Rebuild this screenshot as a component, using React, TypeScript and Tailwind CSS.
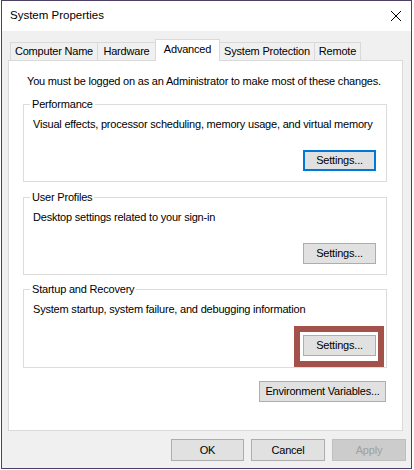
const tabs = [
  { label: "Computer Name", w: "w-[88px]" },
  { label: "Hardware", w: "w-[59px]" },
  { label: "Advanced", w: "w-[65px]", active: true },
  { label: "System Protection", w: "w-[96px]" },
  { label: "Remote", w: "w-[47px]" },
];

const btn =
  "h-[21px] border border-[#adadad] bg-[#e1e1e1] flex items-center justify-center leading-none";

function Group({
  title,
  text,
  focused,
  highlight,
  className = "",
}: {
  title: string;
  text: string;
  focused?: boolean;
  highlight?: boolean;
  className?: string;
}) {
  return (
    <fieldset className={`border border-[#dcdcdc] pl-[9px] pr-[10px] ${className}`}>
      <legend className="leading-[16px] px-[2px] -ml-[3px]">{title}</legend>
      <div className="mt-[4px] leading-[16px]">{text}</div>
      <div className="mt-[18px] flex justify-end">
        <div className="relative">
          <button
            className={`w-[73px] h-[21px] flex items-center justify-center bg-[#e1e1e1] ${
              focused ? "border-2 border-[#0078d7]" : "border border-[#adadad]"
            }`}
          >
            Settings...
          </button>
          {highlight && (
            <div className="pointer-events-none absolute -left-[9px] -right-[8px] -top-[9px] -bottom-[11px] border-[6px] border-[#a3524b]" />
          )}
        </div>
      </div>
    </fieldset>
  );
}

export default function App() {
  return (
    <div className="w-[414px] h-[470px] bg-white font-['Liberation_Sans',Arial,sans-serif] text-[11px] tracking-[-0.2px] text-black">
      <div className="ml-[1px] w-[411px] h-[469px] border border-[#4d3f66] bg-[#f0f0f0] flex flex-col">
        {/* Title bar */}
        <div className="h-[30px] bg-white flex items-center justify-between pl-[8px] pr-[6px]">
          <span className="text-[11.5px] tracking-normal">System Properties</span>
          <svg width="12" height="12" viewBox="0 0 12 12" className="mr-[3px]">
            <path d="M1 1 L11 11 M11 1 L1 11" stroke="#000" strokeWidth="1" fill="none" />
          </svg>
        </div>

        {/* Tabs */}
        <div className="pt-[8px] pl-[8px] flex items-end h-[29px]">
          {tabs.map((t, i) =>
            t.active ? (
              <div
                key={t.label}
                className={`${t.w} ${i ? "-ml-px" : ""} h-[22px] -mb-px relative z-10 bg-white border border-b-0 border-[#d9d9d9] flex items-center justify-center pb-[2px]`}
              >
                {t.label}
              </div>
            ) : (
              <div
                key={t.label}
                className={`${t.w} ${i ? "-ml-px" : ""} h-[18px] bg-[#f0f0f0] border border-b-0 border-[#d9d9d9] flex items-center justify-center`}
              >
                {t.label}
              </div>
            )
          )}
        </div>

        {/* Panel */}
        <div className="ml-[6px] w-[395px] h-[371px] border border-[#d9d9d9] bg-white pt-[12px] pl-[14px] pr-[15px] flex flex-col">
          <div className="pl-[4px] leading-[16px]">
            You must be logged on as an Administrator to make most of these changes.
          </div>
          <Group
            className="mt-[7px] pb-[10px]"
            title="Performance"
            text="Visual effects, processor scheduling, memory usage, and virtual memory"
            focused
          />
          <Group
            className="mt-[7px] pb-[10px]"
            title="User Profiles"
            text="Desktop settings related to your sign-in"
          />
          <Group
            className="mt-[6px] pb-[11px]"
            title="Startup and Recovery"
            text="System startup, system failure, and debugging information"
            highlight
          />
          <div className="mt-[13px] flex justify-end pr-[1px]">
            <button className={`${btn} w-[127px]`}>Environment Variables...</button>
          </div>
        </div>

        {/* Footer buttons */}
        <div className="mt-[8px] flex justify-end gap-[7px] pr-[5px]">
          <button className={`${btn} h-[22px] w-[73px]`}>OK</button>
          <button className={`${btn} h-[22px] w-[74px]`}>Cancel</button>
          <button className="h-[22px] w-[74px] border border-[#bfbfbf] bg-[#cccccc] text-[#a0a0a0] flex items-center justify-center leading-none">
            Apply
          </button>
        </div>
      </div>
    </div>
  );
}
